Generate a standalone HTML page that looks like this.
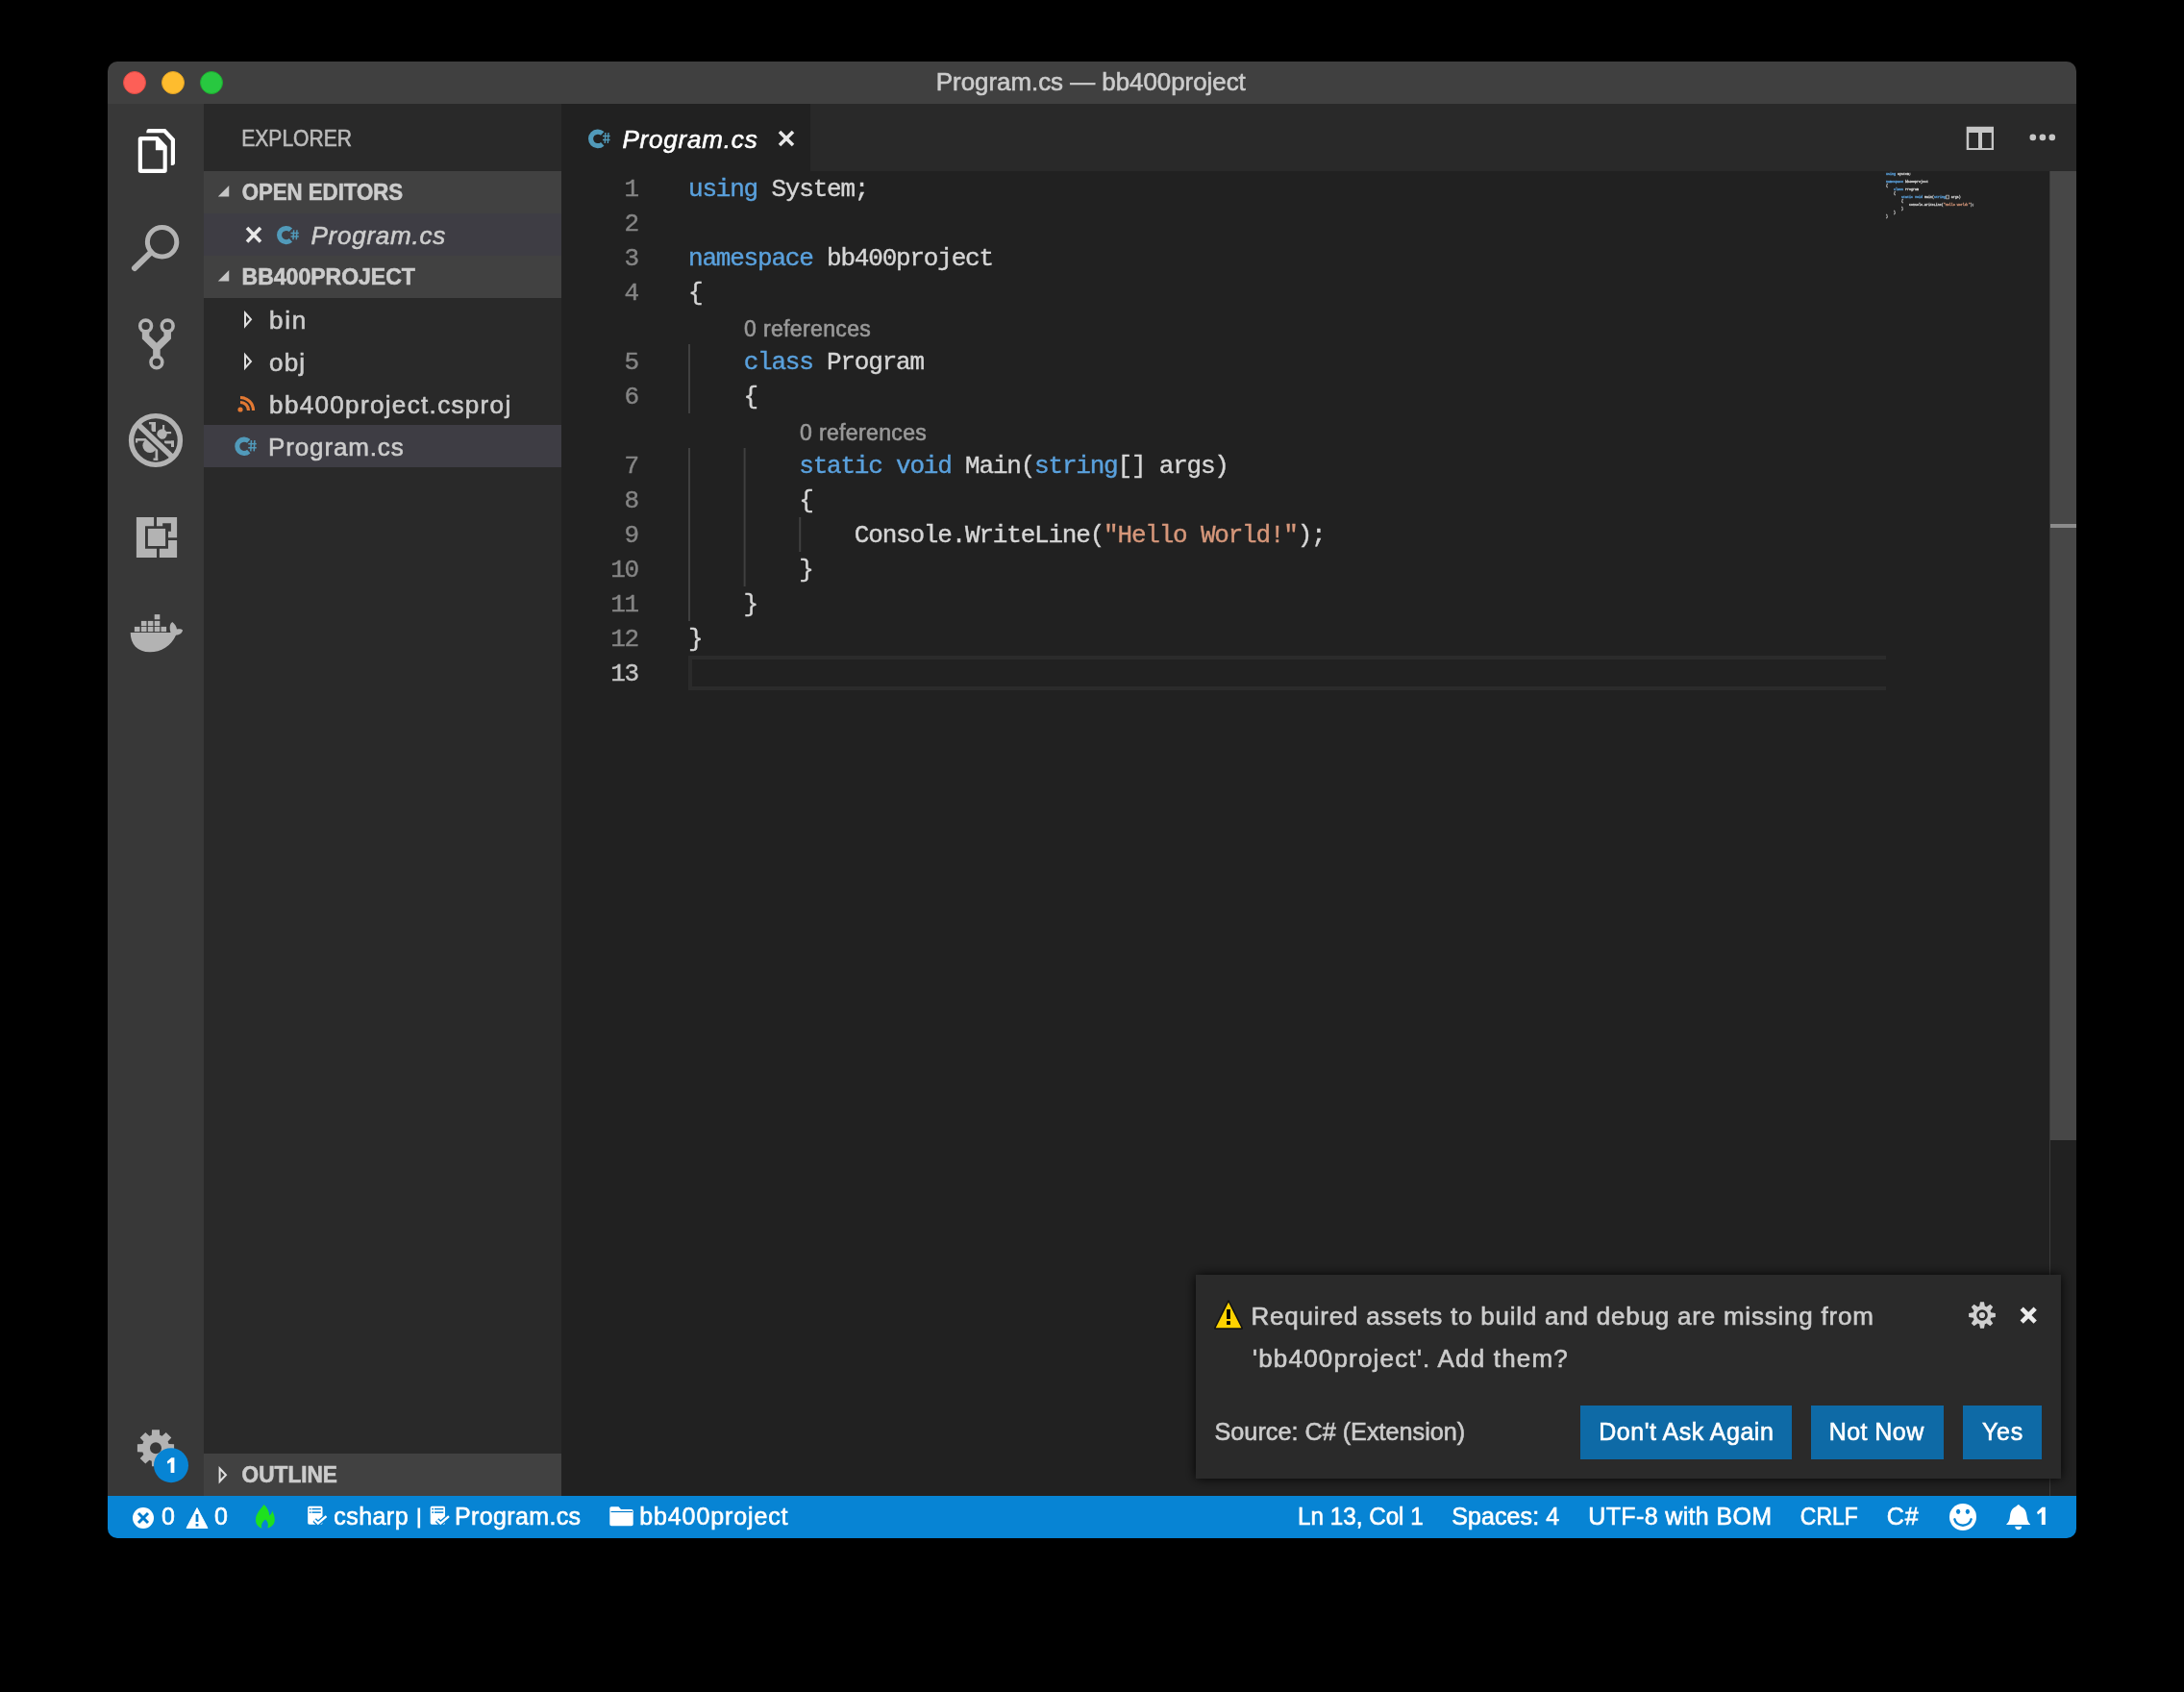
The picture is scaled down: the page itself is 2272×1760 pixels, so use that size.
<!DOCTYPE html>
<html><head><meta charset="utf-8"><title>Program.cs — bb400project</title><style>html,body{margin:0;padding:0;background:#000;width:2272px;height:1760px;overflow:hidden;font-family:"Liberation Sans",sans-serif}</style></head><body>
<svg width="2272" height="1760" viewBox="0 0 2272 1760" style="position:absolute;left:0;top:0;display:block;will-change:transform"><defs><clipPath id="win"><rect x="112" y="64" width="2048" height="1536" rx="10" ry="10"/></clipPath><filter id="nshadow" x="-10%" y="-20%" width="120%" height="140%"><feGaussianBlur in="SourceAlpha" stdDeviation="6"/><feOffset dx="0" dy="0"/><feComponentTransfer><feFuncA type="linear" slope="0.9"/></feComponentTransfer><feMerge><feMergeNode/><feMergeNode in="SourceGraphic"/></feMerge></filter></defs>
<g clip-path="url(#win)">
<rect x="112" y="64" width="2048" height="44" fill="#404040"/>
<rect x="112" y="108" width="100" height="1448" fill="#383838"/>
<rect x="212" y="108" width="372" height="1448" fill="#292929"/>
<rect x="584" y="108" width="1576" height="70" fill="#292929"/>
<rect x="584" y="178" width="1576" height="1378" fill="#212121"/>
<rect x="112" y="1556" width="2048" height="44" fill="#0784d4"/>
<circle cx="140" cy="86" r="11.5" fill="#fd5f57" stroke="#de4a42" stroke-width="1"/>
<circle cx="180" cy="86" r="11.5" fill="#febc2e" stroke="#dfa023" stroke-width="1"/>
<circle cx="220" cy="86" r="11.5" fill="#28c840" stroke="#1eab2f" stroke-width="1"/>
<text transform="translate(973.81,94.20) scale(0.9953,1)" x="0" y="0" font-family="Liberation Sans" font-size="26" font-weight="normal" font-style="normal" fill="#cccccc" stroke="#cccccc" stroke-width="0.6" style="white-space:pre">Program.cs — bb400project</text>
<path fill="#ffffff" fill-rule="evenodd" d="M143.75,144.6 Q143.75,141.9 146.45,141.9 H164.3 L173.75,151.9 V177.3 Q173.75,180 171.05,180 H146.45 Q143.75,180 143.75,177.3 Z M148,146.2 H161.9 V156.3 H169.6 V175.8 H148 Z"/>
<path fill="#ffffff" d="M154.9,134 H172.1 L182,144.4 V169.3 Q182,172 179.3,172 H177.8 V146.2 L170.3,138.2 H152.3 Q152.3,134 154.9,134 Z"/>
<g fill="none" stroke="#b3b3b3"><circle cx="168.6" cy="251.7" r="15.2" stroke-width="5"/><line x1="140" y1="279" x2="157" y2="262.5" stroke-width="6" stroke-linecap="round"/></g>
<g fill="none" stroke="#b3b3b3" stroke-width="3.6"><circle cx="151.6" cy="339" r="5.9"/><circle cx="174.2" cy="339" r="5.9"/><circle cx="162.9" cy="376.8" r="5.9"/></g>
<path d="M151.6,344.5 V351 L162.9,362 L174.2,351 V344.5 M162.9,362 V371.2" fill="none" stroke="#b3b3b3" stroke-width="7.5" stroke-linejoin="miter"/>
<g fill="#b3b3b3"><circle cx="156" cy="463.5" r="7.6"/><circle cx="168.5" cy="451.5" r="5.2"/><rect x="141" y="456" width="13" height="2.6"/><rect x="141" y="456" width="2.2" height="4.5"/><rect x="161.5" y="466" width="2.7" height="13"/><rect x="159.5" y="476.5" width="4.7" height="2.4"/><rect x="157.5" y="439" width="4.5" height="10"/><rect x="155" y="439" width="7" height="2.4"/><rect x="169" y="442" width="2.2" height="6"/><rect x="172.5" y="449" width="5.6" height="2.2"/><rect x="171" y="458.5" width="10" height="3"/><rect x="178" y="458.5" width="3" height="6.5"/></g>
<line x1="142" y1="440" x2="181" y2="477" stroke="#383838" stroke-width="10"/>
<line x1="142" y1="440" x2="181" y2="477" stroke="#b3b3b3" stroke-width="5.8"/>
<circle cx="162" cy="458" r="25.4" fill="none" stroke="#b3b3b3" stroke-width="5.4"/>
<g fill="#b3b3b3"><path d="M141.9,538.1 H160.1 V547.2 H151 V570.75 H163 V580 H141.9 Z"/><path d="M163,538.1 H184.1 V559.2 H175 V552.75 H177.9 V544.3 H169.2 V547.2 H163 Z"/><path d="M175,562 H184.1 V580 H165.9 V570.75 H175 Z"/><rect x="153.9" y="549.9" width="18.2" height="18.1"/></g>
<g fill="#b3b3b3"><rect x="139.9" y="651.9" width="5.6" height="5.2"/><rect x="146.9" y="651.9" width="5.6" height="5.2"/><rect x="153.8" y="651.9" width="5.6" height="5.2"/><rect x="160.7" y="651.9" width="5.6" height="5.2"/><rect x="167.5" y="651.9" width="5.6" height="5.2"/><rect x="146.9" y="645.9" width="5.6" height="5.2"/><rect x="153.8" y="645.9" width="5.6" height="5.2"/><rect x="160.7" y="645.9" width="5.6" height="5.2"/><rect x="160.7" y="639.1" width="5.6" height="5.2"/><path d="M135.7,658 L177.5,658 C176,652.5 176.8,648.5 179.3,647 C182,649 183.6,652 184,654.6 C186.5,653.8 189,654.3 190.1,655.6 C189.6,658.6 186.6,660.6 183,660.7 C178,672 167.5,678.3 156,678.3 C143,678.3 135.7,670 135.7,658 Z"/></g>
<path d="M157.80,1492.68 L158.03,1487.16 L165.97,1487.16 L166.20,1492.68 A14.2,14.2 0 0 1 168.63,1493.69 L172.69,1489.94 L178.31,1495.56 L174.56,1499.62 A14.2,14.2 0 0 1 175.57,1502.05 L181.09,1502.28 L181.09,1510.22 L175.57,1510.45 A14.2,14.2 0 0 1 174.56,1512.88 L178.31,1516.94 L172.69,1522.56 L168.63,1518.81 A14.2,14.2 0 0 1 166.20,1519.82 L165.97,1525.34 L158.03,1525.34 L157.80,1519.82 A14.2,14.2 0 0 1 155.37,1518.81 L151.31,1522.56 L145.69,1516.94 L149.44,1512.88 A14.2,14.2 0 0 1 148.43,1510.45 L142.91,1510.22 L142.91,1502.28 L148.43,1502.05 A14.2,14.2 0 0 1 149.44,1499.62 L145.69,1495.56 L151.31,1489.94 L155.37,1493.69 A14.2,14.2 0 0 1 157.80,1492.68 Z" fill="#b3b3b3"/>
<circle cx="162" cy="1506.25" r="6" fill="#383838"/>
<circle cx="178" cy="1524.2" r="18" fill="#0784d4"/>
<path d="M177.6,1531.9 V1520.8 L174.5,1522.8 L173.8,1520.3 L178.3,1516.3 H181.4 V1531.9 Z" fill="#fff"/>
<text transform="translate(251.27,152.00) scale(0.9156,1)" x="0" y="0" font-family="Liberation Sans" font-size="23" font-weight="normal" font-style="normal" fill="#bbbbbb" stroke="#bbbbbb" stroke-width="0.6" style="white-space:pre">EXPLORER</text>
<rect x="212" y="178" width="372" height="44" fill="#414141"/>
<rect x="212" y="266" width="372" height="44" fill="#414141"/>
<rect x="212" y="1512" width="372" height="44" fill="#414141"/>
<rect x="212" y="222" width="372" height="44" fill="#3e3d44"/>
<rect x="212" y="442" width="372" height="44" fill="#3e3d44"/>
<path d="M238.25,193 V204.5 H226.75 Z" fill="#c5c5c5"/>
<path d="M238.25,281 V292.5 H226.75 Z" fill="#c5c5c5"/>
<text transform="translate(251.63,208.00) scale(0.9669,1)" x="0" y="0" font-family="Liberation Sans" font-size="23" font-weight="bold" font-style="normal" fill="#cccccc" stroke="#cccccc" stroke-width="0.6" style="white-space:pre">OPEN EDITORS</text>
<text x="251.60" y="295.50" font-family="Liberation Sans" font-size="23" font-weight="bold" font-style="normal" fill="#cccccc" stroke="#cccccc" stroke-width="0.6" style="letter-spacing:0.000px;white-space:pre">BB400PROJECT</text>
<g stroke="#e8e8e8" stroke-width="3.6" stroke-linecap="butt"><line x1="257" y1="237" x2="271" y2="251.5"/><line x1="271" y1="237" x2="257" y2="251.5"/></g>
<path d="M302.48,239.25 A7.16,7.16 0 1 0 302.48,249.90" fill="none" stroke="#519aba" stroke-width="5.03"/><g stroke="#519aba" stroke-width="1.49"><line x1="305.65" y1="239.25" x2="304.99" y2="249.25"/><line x1="308.97" y1="239.25" x2="308.31" y2="249.25"/><line x1="302.50" y1="242.45" x2="310.80" y2="242.45"/><line x1="302.50" y1="246.05" x2="310.80" y2="246.05"/></g>
<text x="323.50" y="253.60" font-family="Liberation Sans" font-size="26" font-weight="normal" font-style="italic" fill="#cccccc" stroke="#cccccc" stroke-width="0.6" style="letter-spacing:0.750px;white-space:pre">Program.cs</text>
<path d="M255,325.5 L261,332.2 L255,339 Z" fill="none" stroke="#e0e0e0" stroke-width="2"/>
<path d="M255,369.2 L261,376 L255,382.7 Z" fill="none" stroke="#e0e0e0" stroke-width="2"/>
<text x="280.10" y="342.10" font-family="Liberation Sans" font-size="26" font-weight="normal" font-style="normal" fill="#cccccc" stroke="#cccccc" stroke-width="0.6" style="letter-spacing:1.650px;white-space:pre">bin</text>
<text x="280.10" y="385.90" font-family="Liberation Sans" font-size="26" font-weight="normal" font-style="normal" fill="#cccccc" stroke="#cccccc" stroke-width="0.6" style="letter-spacing:1.150px;white-space:pre">obj</text>
<g fill="none" stroke="#e37933" stroke-width="3.2"><path d="M250,418.5 A8.5,8.5 0 0 1 258.5,427"/><path d="M250,413.5 A13.5,13.5 0 0 1 263.5,427"/></g>
<circle cx="250" cy="426" r="2.6" fill="#e37933"/>
<text x="280.10" y="430.00" font-family="Liberation Sans" font-size="26" font-weight="normal" font-style="normal" fill="#cccccc" stroke="#cccccc" stroke-width="0.6" style="letter-spacing:1.344px;white-space:pre">bb400project.csproj</text>
<path d="M258.77,458.97 A7.18,7.18 0 1 0 258.77,469.63" fill="none" stroke="#519aba" stroke-width="5.04"/><g stroke="#519aba" stroke-width="1.53"><line x1="261.48" y1="458.00" x2="260.80" y2="469.40"/><line x1="264.88" y1="458.00" x2="264.20" y2="469.40"/><line x1="258.25" y1="461.65" x2="266.75" y2="461.65"/><line x1="258.25" y1="465.75" x2="266.75" y2="465.75"/></g>
<text x="279.10" y="474.00" font-family="Liberation Sans" font-size="26" font-weight="normal" font-style="normal" fill="#cccccc" stroke="#cccccc" stroke-width="0.6" style="letter-spacing:0.850px;white-space:pre">Program.cs</text>
<path d="M228.6,1527.5 L235,1534.25 L228.6,1541 Z" fill="none" stroke="#e0e0e0" stroke-width="2"/>
<text transform="translate(251.62,1542.25) scale(0.9848,1)" x="0" y="0" font-family="Liberation Sans" font-size="23" font-weight="bold" font-style="normal" fill="#cccccc" stroke="#cccccc" stroke-width="0.6" style="white-space:pre">OUTLINE</text>
<rect x="584" y="108" width="259" height="70" fill="#212121"/>
<path d="M626.77,138.94 A7.31,7.31 0 1 0 626.77,149.81" fill="none" stroke="#519aba" stroke-width="5.13"/><g stroke="#519aba" stroke-width="1.37"><line x1="629.89" y1="138.00" x2="629.28" y2="149.00"/><line x1="632.93" y1="138.00" x2="632.32" y2="149.00"/><line x1="627.00" y1="141.52" x2="634.60" y2="141.52"/><line x1="627.00" y1="145.48" x2="634.60" y2="145.48"/></g>
<text x="647.40" y="153.60" font-family="Liberation Sans" font-size="26" font-weight="normal" font-style="italic" fill="#ffffff" stroke="#ffffff" stroke-width="0.6" style="letter-spacing:0.817px;white-space:pre">Program.cs</text>
<g stroke="#e8e8e8" stroke-width="3.6"><line x1="811" y1="137" x2="825" y2="151"/><line x1="825" y1="137" x2="811" y2="151"/></g>
<path fill="#c5c5c5" fill-rule="evenodd" d="M2045.7,131.8 H2074 V156 H2045.7 Z M2048.2,138 V153.9 H2058 V138 Z M2062,138 V153.9 H2071.7 V138 Z"/>
<g fill="#c5c5c5"><circle cx="2114.8" cy="142.9" r="3.3"/><circle cx="2124.9" cy="142.9" r="3.3"/><circle cx="2134.8" cy="142.9" r="3.3"/></g>
<g fill="#2b2b2b"><rect x="716" y="682" width="1246" height="4"/><rect x="716" y="714" width="1246" height="4"/><rect x="716" y="682" width="4" height="36"/></g>
<rect x="716.0" y="358" width="2" height="72" fill="#404040"/>
<rect x="716.0" y="466" width="2" height="180" fill="#404040"/>
<rect x="773.6" y="466" width="2" height="144" fill="#404040"/>
<rect x="831.2" y="538" width="2" height="36" fill="#404040"/>
<text x="664" y="204" text-anchor="end" font-family="Liberation Mono" font-size="26" fill="#858585" stroke="#858585" stroke-width="0.4" style="letter-spacing:-1.200px">1</text>
<text x="716.0" y="204" font-family="Liberation Mono" font-size="26" stroke-width="0.4" style="letter-spacing:-1.200px;white-space:pre"><tspan fill="#5aa1dd" stroke="#5aa1dd">using</tspan><tspan fill="#d6d6d6" stroke="#d6d6d6"> System;</tspan></text>
<text x="664" y="240" text-anchor="end" font-family="Liberation Mono" font-size="26" fill="#858585" stroke="#858585" stroke-width="0.4" style="letter-spacing:-1.200px">2</text>
<text x="664" y="276" text-anchor="end" font-family="Liberation Mono" font-size="26" fill="#858585" stroke="#858585" stroke-width="0.4" style="letter-spacing:-1.200px">3</text>
<text x="716.0" y="276" font-family="Liberation Mono" font-size="26" stroke-width="0.4" style="letter-spacing:-1.200px;white-space:pre"><tspan fill="#5aa1dd" stroke="#5aa1dd">namespace</tspan><tspan fill="#d6d6d6" stroke="#d6d6d6"> bb400project</tspan></text>
<text x="664" y="312" text-anchor="end" font-family="Liberation Mono" font-size="26" fill="#858585" stroke="#858585" stroke-width="0.4" style="letter-spacing:-1.200px">4</text>
<text x="716.0" y="312" font-family="Liberation Mono" font-size="26" stroke-width="0.4" style="letter-spacing:-1.200px;white-space:pre"><tspan fill="#d6d6d6" stroke="#d6d6d6">{</tspan></text>
<text x="664" y="384" text-anchor="end" font-family="Liberation Mono" font-size="26" fill="#858585" stroke="#858585" stroke-width="0.4" style="letter-spacing:-1.200px">5</text>
<text x="716.0" y="384" font-family="Liberation Mono" font-size="26" stroke-width="0.4" style="letter-spacing:-1.200px;white-space:pre"><tspan fill="#d6d6d6" stroke="#d6d6d6">    </tspan><tspan fill="#5aa1dd" stroke="#5aa1dd">class</tspan><tspan fill="#d6d6d6" stroke="#d6d6d6"> Program</tspan></text>
<text x="664" y="420" text-anchor="end" font-family="Liberation Mono" font-size="26" fill="#858585" stroke="#858585" stroke-width="0.4" style="letter-spacing:-1.200px">6</text>
<text x="716.0" y="420" font-family="Liberation Mono" font-size="26" stroke-width="0.4" style="letter-spacing:-1.200px;white-space:pre"><tspan fill="#d6d6d6" stroke="#d6d6d6">    {</tspan></text>
<text x="664" y="492" text-anchor="end" font-family="Liberation Mono" font-size="26" fill="#858585" stroke="#858585" stroke-width="0.4" style="letter-spacing:-1.200px">7</text>
<text x="716.0" y="492" font-family="Liberation Mono" font-size="26" stroke-width="0.4" style="letter-spacing:-1.200px;white-space:pre"><tspan fill="#d6d6d6" stroke="#d6d6d6">        </tspan><tspan fill="#5aa1dd" stroke="#5aa1dd">static</tspan><tspan fill="#d6d6d6" stroke="#d6d6d6"> </tspan><tspan fill="#5aa1dd" stroke="#5aa1dd">void</tspan><tspan fill="#d6d6d6" stroke="#d6d6d6"> Main(</tspan><tspan fill="#5aa1dd" stroke="#5aa1dd">string</tspan><tspan fill="#d6d6d6" stroke="#d6d6d6">[] args)</tspan></text>
<text x="664" y="528" text-anchor="end" font-family="Liberation Mono" font-size="26" fill="#858585" stroke="#858585" stroke-width="0.4" style="letter-spacing:-1.200px">8</text>
<text x="716.0" y="528" font-family="Liberation Mono" font-size="26" stroke-width="0.4" style="letter-spacing:-1.200px;white-space:pre"><tspan fill="#d6d6d6" stroke="#d6d6d6">        {</tspan></text>
<text x="664" y="564" text-anchor="end" font-family="Liberation Mono" font-size="26" fill="#858585" stroke="#858585" stroke-width="0.4" style="letter-spacing:-1.200px">9</text>
<text x="716.0" y="564" font-family="Liberation Mono" font-size="26" stroke-width="0.4" style="letter-spacing:-1.200px;white-space:pre"><tspan fill="#d6d6d6" stroke="#d6d6d6">            Console.WriteLine(</tspan><tspan fill="#d6977a" stroke="#d6977a">"Hello World!"</tspan><tspan fill="#d6d6d6" stroke="#d6d6d6">);</tspan></text>
<text x="664" y="600" text-anchor="end" font-family="Liberation Mono" font-size="26" fill="#858585" stroke="#858585" stroke-width="0.4" style="letter-spacing:-1.200px">10</text>
<text x="716.0" y="600" font-family="Liberation Mono" font-size="26" stroke-width="0.4" style="letter-spacing:-1.200px;white-space:pre"><tspan fill="#d6d6d6" stroke="#d6d6d6">        }</tspan></text>
<text x="664" y="636" text-anchor="end" font-family="Liberation Mono" font-size="26" fill="#858585" stroke="#858585" stroke-width="0.4" style="letter-spacing:-1.200px">11</text>
<text x="716.0" y="636" font-family="Liberation Mono" font-size="26" stroke-width="0.4" style="letter-spacing:-1.200px;white-space:pre"><tspan fill="#d6d6d6" stroke="#d6d6d6">    }</tspan></text>
<text x="664" y="672" text-anchor="end" font-family="Liberation Mono" font-size="26" fill="#858585" stroke="#858585" stroke-width="0.4" style="letter-spacing:-1.200px">12</text>
<text x="716.0" y="672" font-family="Liberation Mono" font-size="26" stroke-width="0.4" style="letter-spacing:-1.200px;white-space:pre"><tspan fill="#d6d6d6" stroke="#d6d6d6">}</tspan></text>
<text x="664" y="708" text-anchor="end" font-family="Liberation Mono" font-size="26" fill="#c6c6c6" stroke="#c6c6c6" stroke-width="0.4" style="letter-spacing:-1.200px">13</text>
<text x="774.00" y="350.00" font-family="Liberation Sans" font-size="23" font-weight="normal" font-style="normal" fill="#999999" stroke="#999999" stroke-width="0.6" style="letter-spacing:0.364px;white-space:pre">0 references</text>
<text x="832.00" y="458.00" font-family="Liberation Sans" font-size="23" font-weight="normal" font-style="normal" fill="#999999" stroke="#999999" stroke-width="0.6" style="letter-spacing:0.364px;white-space:pre">0 references</text>
<g transform="translate(1962,178.5) scale(0.12821,0.1333)" opacity="0.9"><text x="0" y="26" font-family="Liberation Mono" font-size="26" stroke-width="2.5" style="white-space:pre"><tspan fill="#5aa1dd" stroke="#5aa1dd">using</tspan><tspan fill="#d6d6d6" stroke="#d6d6d6"> System;</tspan></text><text x="0" y="86" font-family="Liberation Mono" font-size="26" stroke-width="2.5" style="white-space:pre"><tspan fill="#5aa1dd" stroke="#5aa1dd">namespace</tspan><tspan fill="#d6d6d6" stroke="#d6d6d6"> bb400project</tspan></text><text x="0" y="116" font-family="Liberation Mono" font-size="26" stroke-width="2.5" style="white-space:pre"><tspan fill="#d6d6d6" stroke="#d6d6d6">{</tspan></text><text x="0" y="146" font-family="Liberation Mono" font-size="26" stroke-width="2.5" style="white-space:pre"><tspan fill="#d6d6d6" stroke="#d6d6d6">    </tspan><tspan fill="#5aa1dd" stroke="#5aa1dd">class</tspan><tspan fill="#d6d6d6" stroke="#d6d6d6"> Program</tspan></text><text x="0" y="176" font-family="Liberation Mono" font-size="26" stroke-width="2.5" style="white-space:pre"><tspan fill="#d6d6d6" stroke="#d6d6d6">    {</tspan></text><text x="0" y="206" font-family="Liberation Mono" font-size="26" stroke-width="2.5" style="white-space:pre"><tspan fill="#d6d6d6" stroke="#d6d6d6">        </tspan><tspan fill="#5aa1dd" stroke="#5aa1dd">static</tspan><tspan fill="#d6d6d6" stroke="#d6d6d6"> </tspan><tspan fill="#5aa1dd" stroke="#5aa1dd">void</tspan><tspan fill="#d6d6d6" stroke="#d6d6d6"> Main(</tspan><tspan fill="#5aa1dd" stroke="#5aa1dd">string</tspan><tspan fill="#d6d6d6" stroke="#d6d6d6">[] args)</tspan></text><text x="0" y="236" font-family="Liberation Mono" font-size="26" stroke-width="2.5" style="white-space:pre"><tspan fill="#d6d6d6" stroke="#d6d6d6">        {</tspan></text><text x="0" y="266" font-family="Liberation Mono" font-size="26" stroke-width="2.5" style="white-space:pre"><tspan fill="#d6d6d6" stroke="#d6d6d6">            Console.WriteLine(</tspan><tspan fill="#d6977a" stroke="#d6977a">"Hello World!"</tspan><tspan fill="#d6d6d6" stroke="#d6d6d6">);</tspan></text><text x="0" y="296" font-family="Liberation Mono" font-size="26" stroke-width="2.5" style="white-space:pre"><tspan fill="#d6d6d6" stroke="#d6d6d6">        }</tspan></text><text x="0" y="326" font-family="Liberation Mono" font-size="26" stroke-width="2.5" style="white-space:pre"><tspan fill="#d6d6d6" stroke="#d6d6d6">    }</tspan></text><text x="0" y="356" font-family="Liberation Mono" font-size="26" stroke-width="2.5" style="white-space:pre"><tspan fill="#d6d6d6" stroke="#d6d6d6">}</tspan></text></g>
<rect x="2132" y="178" width="1" height="1378" fill="#3a3a3a"/>
<rect x="2133" y="178" width="27" height="1008" fill="#474747"/>
<rect x="2133" y="545" width="27" height="4" fill="#8c8c8c"/>
<g filter="url(#nshadow)"><rect x="1244" y="1326" width="900" height="212" fill="#292929"/></g>
<path d="M1278,1353 L1292,1380.8 Q1292.6,1382 1291.2,1382 H1264.8 Q1263.4,1382 1264,1380.8 Z" fill="#ffd200" stroke="#111" stroke-width="1.6" stroke-linejoin="round"/>
<rect x="1276.1" y="1362" width="3.8" height="10" fill="#000"/><rect x="1276.1" y="1374.1" width="3.8" height="3.9" fill="#000"/>
<text x="1301.50" y="1377.80" font-family="Liberation Sans" font-size="26" font-weight="normal" font-style="normal" fill="#cccccc" stroke="#cccccc" stroke-width="0.6" style="letter-spacing:0.778px;white-space:pre">Required assets to build and debug are missing from</text>
<text x="1303.00" y="1421.80" font-family="Liberation Sans" font-size="26" font-weight="normal" font-style="normal" fill="#cccccc" stroke="#cccccc" stroke-width="0.6" style="letter-spacing:1.198px;white-space:pre">'bb400project'. Add them?</text>
<text transform="translate(1263.53,1497.70) scale(0.9700,1)" x="0" y="0" font-family="Liberation Sans" font-size="26" font-weight="normal" font-style="normal" fill="#cccccc" stroke="#cccccc" stroke-width="0.6" style="white-space:pre">Source: C# (Extension)</text>
<path d="M2059.16,1358.83 L2060.01,1354.14 L2063.99,1354.14 L2064.84,1358.83 A9.6,9.6 0 0 1 2066.48,1359.51 L2070.39,1356.79 L2073.21,1359.61 L2070.49,1363.52 A9.6,9.6 0 0 1 2071.17,1365.16 L2075.86,1366.01 L2075.86,1369.99 L2071.17,1370.84 A9.6,9.6 0 0 1 2070.49,1372.48 L2073.21,1376.39 L2070.39,1379.21 L2066.48,1376.49 A9.6,9.6 0 0 1 2064.84,1377.17 L2063.99,1381.86 L2060.01,1381.86 L2059.16,1377.17 A9.6,9.6 0 0 1 2057.52,1376.49 L2053.61,1379.21 L2050.79,1376.39 L2053.51,1372.48 A9.6,9.6 0 0 1 2052.83,1370.84 L2048.14,1369.99 L2048.14,1366.01 L2052.83,1365.16 A9.6,9.6 0 0 1 2053.51,1363.52 L2050.79,1359.61 L2053.61,1356.79 L2057.52,1359.51 A9.6,9.6 0 0 1 2059.16,1358.83 Z" fill="#d0d0d0"/><circle cx="2062" cy="1368" r="5.8" fill="#292929"/><circle cx="2062" cy="1368" r="3.1" fill="#d0d0d0"/>
<g stroke="#ececec" stroke-width="4.6"><line x1="2103.2" y1="1361.2" x2="2117.2" y2="1375.2"/><line x1="2117.2" y1="1361.2" x2="2103.2" y2="1375.2"/></g>
<rect x="1644" y="1462" width="220" height="56" fill="#0e6aa6"/>
<rect x="1884" y="1462" width="138" height="56" fill="#0e6aa6"/>
<rect x="2042" y="1462" width="82" height="56" fill="#0e6aa6"/>
<text x="1663.30" y="1498.00" font-family="Liberation Sans" font-size="25" font-weight="normal" font-style="normal" fill="#ffffff" stroke="#ffffff" stroke-width="0.6" style="letter-spacing:0.514px;white-space:pre">Don't Ask Again</text>
<text x="1902.70" y="1498.00" font-family="Liberation Sans" font-size="25" font-weight="normal" font-style="normal" fill="#ffffff" stroke="#ffffff" stroke-width="0.6" style="letter-spacing:0.450px;white-space:pre">Not Now</text>
<text x="2061.90" y="1498.00" font-family="Liberation Sans" font-size="25" font-weight="normal" font-style="normal" fill="#ffffff" stroke="#ffffff" stroke-width="0.6" style="letter-spacing:0.750px;white-space:pre">Yes</text>
<circle cx="149" cy="1579" r="11" fill="#fff"/><g stroke="#007acc" stroke-width="3"><line x1="144" y1="1574" x2="154" y2="1584"/><line x1="154" y1="1574" x2="144" y2="1584"/></g>
<text x="168.00" y="1586.00" font-family="Liberation Sans" font-size="25" font-weight="normal" font-style="normal" fill="#ffffff" stroke="#ffffff" stroke-width="0.6" style="letter-spacing:0.000px;white-space:pre">0</text>
<path d="M205,1568.5 L216,1589.5 H194 Z" fill="#fff" stroke="#fff" stroke-width="1" stroke-linejoin="round"/><rect x="203.6" y="1575" width="2.8" height="8" fill="#007acc"/><rect x="203.6" y="1585" width="2.8" height="2.6" fill="#007acc"/>
<text x="223.00" y="1586.00" font-family="Liberation Sans" font-size="25" font-weight="normal" font-style="normal" fill="#ffffff" stroke="#ffffff" stroke-width="0.6" style="letter-spacing:0.000px;white-space:pre">0</text>
<path d="M274.6,1565 C270,1571 266,1575 266,1581 C266,1585.5 268.5,1588.5 272.5,1589.7 C271.5,1587 272,1584 276,1580.5 C279,1583 279.5,1586.5 278.3,1589.5 C282.5,1588.5 285.8,1585.5 285.8,1581 C285.8,1577 284.5,1574 283.1,1571.2 C282.8,1573.5 282,1575.5 280.3,1576.5 C280,1572 278,1568 274.6,1565 Z" fill="#1ee01e"/>
<rect x="320.2" y="1566.8" width="15.3" height="18.9" rx="1.6" fill="#fff"/><g fill="#0784d4"><rect x="321.8" y="1568.9" width="1.7" height="1.5"/><rect x="324.5" y="1568.9" width="9.3" height="1.5"/><rect x="321.8" y="1572.4" width="1.7" height="1.5"/><rect x="324.5" y="1572.4" width="9.3" height="1.5"/></g><path d="M327.1,1581.2 L330.8,1584.6 L339.5,1577.1" fill="none" stroke="#0784d4" stroke-width="5.2"/><path d="M327.1,1581.2 L330.8,1584.6 L339.5,1577.1" fill="none" stroke="#fff" stroke-width="2.4"/>
<text x="347.25" y="1586.00" font-family="Liberation Sans" font-size="25" font-weight="normal" font-style="normal" fill="#ffffff" stroke="#ffffff" stroke-width="0.6" style="letter-spacing:0.450px;white-space:pre">csharp</text>
<rect x="434.5" y="1568.5" width="2.6" height="21" fill="#fff"/>
<rect x="447.7" y="1566.8" width="15.3" height="18.9" rx="1.6" fill="#fff"/><g fill="#0784d4"><rect x="449.3" y="1568.9" width="1.7" height="1.5"/><rect x="452" y="1568.9" width="9.3" height="1.5"/><rect x="449.3" y="1572.4" width="1.7" height="1.5"/><rect x="452" y="1572.4" width="9.3" height="1.5"/></g><path d="M454.6,1581.2 L458.3,1584.6 L467,1577.1" fill="none" stroke="#0784d4" stroke-width="5.2"/><path d="M454.6,1581.2 L458.3,1584.6 L467,1577.1" fill="none" stroke="#fff" stroke-width="2.4"/>
<text x="473.00" y="1586.00" font-family="Liberation Sans" font-size="25" font-weight="normal" font-style="normal" fill="#ffffff" stroke="#ffffff" stroke-width="0.6" style="letter-spacing:0.361px;white-space:pre">Program.cs</text>
<path d="M634.3,1569 Q634.3,1567.3 636,1567.3 H643.5 L646,1570 H657 Q658.7,1570 658.7,1571.7 V1585.5 Q658.7,1587.2 657,1587.2 H636 Q634.3,1587.2 634.3,1585.5 Z" fill="#fff"/>
<path d="M635.5,1572.5 H658" stroke="#007acc" stroke-width="1.2"/>
<text x="665.25" y="1586.00" font-family="Liberation Sans" font-size="25" font-weight="normal" font-style="normal" fill="#ffffff" stroke="#ffffff" stroke-width="0.6" style="letter-spacing:0.886px;white-space:pre">bb400project</text>
<text transform="translate(1350.06,1586.00) scale(0.9697,1)" x="0" y="0" font-family="Liberation Sans" font-size="25" font-weight="normal" font-style="normal" fill="#ffffff" stroke="#ffffff" stroke-width="0.6" style="white-space:pre">Ln 13, Col 1</text>
<text x="1510.25" y="1586.00" font-family="Liberation Sans" font-size="25" font-weight="normal" font-style="normal" fill="#ffffff" stroke="#ffffff" stroke-width="0.6" style="letter-spacing:0.094px;white-space:pre">Spaces: 4</text>
<text x="1652.25" y="1586.00" font-family="Liberation Sans" font-size="25" font-weight="normal" font-style="normal" fill="#ffffff" stroke="#ffffff" stroke-width="0.6" style="letter-spacing:0.365px;white-space:pre">UTF-8 with BOM</text>
<text transform="translate(1872.83,1586.00) scale(0.9180,1)" x="0" y="0" font-family="Liberation Sans" font-size="25" font-weight="normal" font-style="normal" fill="#ffffff" stroke="#ffffff" stroke-width="0.6" style="white-space:pre">CRLF</text>
<text x="1962.75" y="1586.00" font-family="Liberation Sans" font-size="25" font-weight="normal" font-style="normal" fill="#ffffff" stroke="#ffffff" stroke-width="0.6" style="letter-spacing:1.000px;white-space:pre">C#</text>
<circle cx="2042" cy="1578" r="14" fill="#fff"/><g fill="#0784d4"><ellipse cx="2037.1" cy="1572.3" rx="2.1" ry="2.6"/><ellipse cx="2046.9" cy="1572.3" rx="2.1" ry="2.6"/></g><path d="M2033.4,1580.3 C2035.2,1588.8 2048.8,1588.8 2050.6,1580.3" fill="none" stroke="#0784d4" stroke-width="2.4" stroke-linecap="round"/>
<path d="M2099.8,1565 C2101.5,1566 2102,1567 2103,1567.5 C2107,1569.5 2108,1573 2108.5,1577 C2109,1581 2109.5,1583 2112,1585.5 V1586 H2087.3 V1585.5 C2090,1583 2090.5,1581 2091,1577 C2091.5,1573 2092.5,1569.5 2096.5,1567.5 C2097.5,1567 2098,1566 2099.8,1565 Z" fill="#fff"/><path d="M2096.2,1587.8 H2103.2 Q2103,1591.2 2099.7,1591.2 Q2096.4,1591.2 2096.2,1587.8 Z" fill="#fff"/>
<path d="M2123.8,1586 V1572.8 L2120,1575.6 L2119,1573 L2124.4,1567.8 H2127.8 V1586 Z" fill="#fff"/>
</g></svg>
</body></html>
